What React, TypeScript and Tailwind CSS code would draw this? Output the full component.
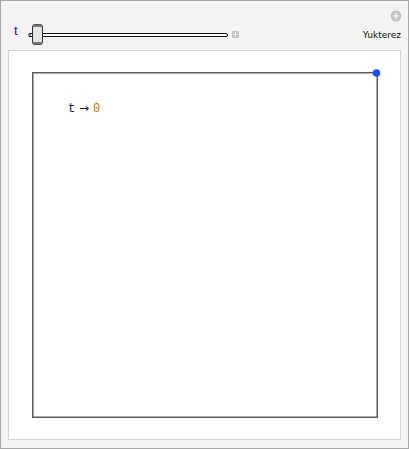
import React from "react";

export default function App() {
  return (
    <div className="w-[409px] h-[449px] bg-[#f3f3f3] border border-[#a8a8a8] flex flex-col" style={{ fontFamily: '"DejaVu Sans", sans-serif' }}>
      <div className="h-[51px] relative flex items-end pb-[4px]">
        <svg className="absolute right-[6px] top-[9px]" width="12" height="12" viewBox="0 0 12 12">
          <circle cx="6" cy="6" r="5.5" fill="#c4c4c4" />
          <rect x="3" y="5.2" width="6" height="1.6" fill="#f3f3f3" />
          <rect x="5.2" y="3" width="1.6" height="6" fill="#f3f3f3" />
        </svg>
        <span className="ml-[13px] text-[13px] leading-[14px] text-[#1b1b6b] mb-[8px]" style={{ fontFamily: '"Liberation Sans", sans-serif' }}>t</span>
        <svg className="ml-[10px]" width="212" height="22" viewBox="0 0 212 22">
          <rect x="0.5" y="9.5" width="199" height="3" rx="1.5" fill="#fff" stroke="#111" strokeWidth="1" />
          <rect x="0" y="10" width="3" height="2" fill="#888" />
          <rect x="4.5" y="0.5" width="10" height="20" rx="2.5" fill="#d9d9d9" stroke="#333" strokeWidth="1" />
          <rect x="6" y="2" width="7" height="17" rx="1.5" fill="#e6e6e6" />
          <rect x="4.5" y="0.5" width="10" height="2.5" rx="1.2" fill="#777" />
          <rect x="4.5" y="18" width="10" height="2.5" rx="1.2" fill="#777" />
          <rect x="204" y="7" width="7" height="7" fill="#c4c4c4" />
          <rect x="205" y="10" width="5" height="1" fill="#f3f3f3" />
          <rect x="207" y="8" width="1" height="5" fill="#f3f3f3" />
        </svg>
        <span className="ml-auto mr-[7px] text-[9px] leading-[10px] text-[#111] mb-[6px]" style={{ fontFamily: '"DejaVu Sans", sans-serif' }}>Yukterez</span>
      </div>
      <div className="mx-[7px] mb-[8px] flex-1 bg-white border border-[#d6d6d6] pl-[23px] pr-[23px] pt-[21px] pb-[21px] flex">
        <svg className="flex-1" width="346" height="346" viewBox="0 0 346 346" style={{ overflow: "visible" }}>
          <rect x="0.75" y="0.75" width="344.5" height="344.5" fill="none" stroke="#5a5a5a" strokeWidth="1.5" />
          <circle cx="344.5" cy="1" r="3.8" fill="#1a4ff0" />
          <text x="36" y="40" fontSize="12" fontFamily='"Liberation Mono", monospace' xmlSpace="preserve">
            <tspan fill="#222">t</tspan>
            <tspan fill="#222" fontFamily='"DejaVu Sans", sans-serif' fontSize="12" x="47">→</tspan>
            <tspan fill="#c06a00" x="61">0</tspan>
          </text>
        </svg>
      </div>
    </div>
  );
}
